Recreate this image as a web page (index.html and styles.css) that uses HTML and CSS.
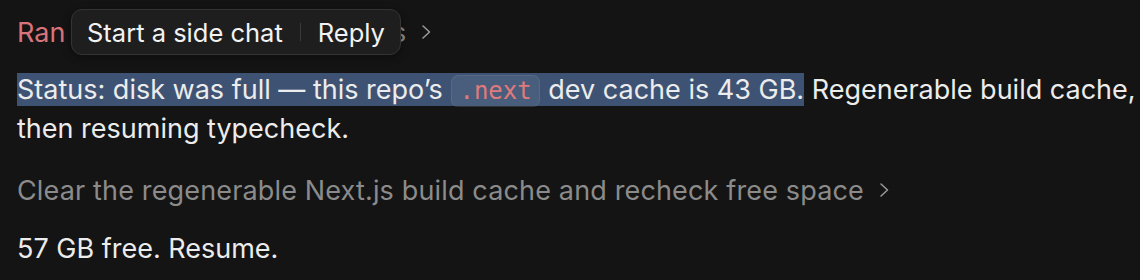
FILE: index.html
```html
<!DOCTYPE html>
<html lang="en">
<head>
<meta charset="utf-8">
<title>Chat</title>
<link rel="stylesheet" href="styles.css">
</head>
<body>
<main class="thread">
  <div class="tool-row">
    <span class="tool-label"><span class="tool-status">Ran</span> 5 commands, read 12 files</span>
    <svg class="chev" viewBox="0 0 12 16" width="12" height="16"><path d="M3 2 L9.5 8 L3 14" fill="none" stroke="currentColor" stroke-width="1.5" stroke-linecap="round" stroke-linejoin="round"/></svg>
    <div class="popover">
      <span class="pop-item">Start a side chat</span>
      <span class="pop-sep"></span>
      <span class="pop-item">Reply</span>
    </div>
  </div>
  <p class="msg"><span class="sel">Status: disk was full — this repo’s <code class="code">.next</code> dev cache is 43 GB.</span> Regenerable build cache, clearing it then resuming typecheck.</p>
  <div class="tool-row muted">
    <span class="tool-label">Clear the regenerable Next.js build cache and recheck free space</span>
    <svg class="chev" viewBox="0 0 12 16" width="12" height="16"><path d="M3 2 L9.5 8 L3 14" fill="none" stroke="currentColor" stroke-width="1.5" stroke-linecap="round" stroke-linejoin="round"/></svg>
  </div>
  <p class="msg last">57 GB free. Resume.</p>
</main>
</body>
</html>
```

FILE: styles.css
```css
html, body {
  margin: 0;
  background: #141414;
  overflow: hidden;
}
body {
  width: 1140px;
  height: 280px;
  font-family: Inter, "Noto Sans", sans-serif;
  font-size: 27px;
  color: #ececec;
}
.thread {
  box-sizing: border-box;
  width: 1300px;
  padding: 14px 0 0 17px;
  display: flex;
  flex-direction: column;
}
.tool-row {
  position: relative;
  display: flex;
  align-items: center;
  gap: 14px;
  height: 36px;
  color: #8b8b8b;
}
.tool-status { color: #d9737b; }
.chev { color: #9a9a9a; flex: none; }
.popover {
  position: absolute;
  left: 54px;
  top: -5px;
  height: 44px;
  display: flex;
  align-items: center;
  gap: 17px;
  padding: 0 15px;
  background: #1e1e1e;
  border: 1px solid #343434;
  border-radius: 11px;
  box-shadow: 0 2px 8px rgba(0,0,0,0.4);
  color: #f2f2f2;
  font-size: 25.5px;
}
.pop-sep {
  width: 1px;
  height: 18px;
  background: #3a3a3a;
}
.msg {
  margin: 21px 0 0;
  line-height: 38px;
}
.sel {
  background: #3e5374;
}
.code {
  font-family: "DejaVu Sans Mono", monospace;
  font-size: 24px;
  color: #e07b7d;
  background: rgba(255,255,255,0.06);
  border: 1px solid rgba(255,255,255,0.08);
  border-radius: 7px;
  padding: 1px 7px;
  margin: 0 1px;
}
.muted {
  margin-top: 24px;
  letter-spacing: 0.15px;
}
.msg.last { margin-top: 22px; }
```
